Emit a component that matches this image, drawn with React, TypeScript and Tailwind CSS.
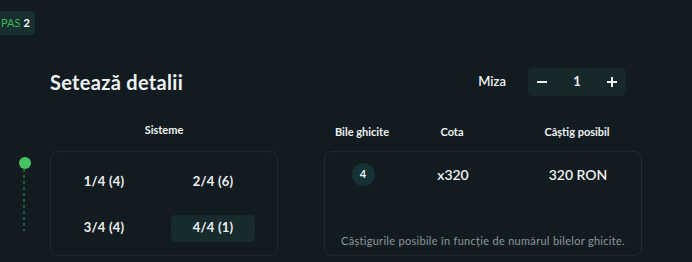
import React, { useState } from 'react';

const systems = [
    { id: '1/4', label: '1/4 (4)' },
    { id: '2/4', label: '2/4 (6)' },
    { id: '3/4', label: '3/4 (4)' },
    { id: '4/4', label: '4/4 (1)' },
];

const App: React.FC = () => {
    const [stake, setStake] = useState(1);
    const [selected, setSelected] = useState('4/4');

    return (
        <div
            className="w-[692px] h-[262px] overflow-hidden bg-[#121c20] text-[#eef1f1]"
            style={{ fontFamily: 'Lato, "Noto Sans", sans-serif' }}
        >
            <div className="pt-[9px]">
                <div className="inline-flex items-center h-[24px] pl-[1px] pr-[5px] rounded-r-[4px] bg-[#17302f] text-[11px] leading-none">
                    <span className="text-[#3fb35a]">PAS</span>
                    <span className="ml-[3px] font-bold text-white">2</span>
                </div>
            </div>

            <div className="flex">
                {/* timeline */}
                <div className="w-[50px] flex flex-col items-center pt-[122px]">
                    <div className="w-[12px] h-[12px] rounded-full bg-[#46c463] -ml-[1px]" />
                    <svg width="2" height="62" className="-ml-[2px]">
                        <line x1="1" y1="0" x2="1" y2="62" stroke="#3d9c55" strokeWidth="1" strokeDasharray="3 3" />
                    </svg>
                </div>

                <div className="w-[592px]">
                    <div className="flex items-center justify-between h-[28px] mt-[33px] pr-[16px]">
                        <h1 className="text-[20px] font-bold leading-none tracking-[0.3px]">Setează detalii</h1>
                        <div className="flex items-center gap-[22px]">
                            <span className="text-[13px] font-semibold">Miza</span>
                            <div className="flex items-center w-[98px] h-[28px] rounded-[5px] bg-[#16282b]">
                                <button
                                    className="w-[28px] h-[28px] flex items-center justify-center"
                                    onClick={() => setStake(Math.max(1, stake - 1))}
                                >
                                    <svg width="12" height="12" viewBox="0 0 12 12">
                                        <path d="M1 6h10" stroke="#eef1f1" strokeWidth="2" />
                                    </svg>
                                </button>
                                <span className="flex-1 text-center text-[13px] font-bold">{stake}</span>
                                <button
                                    className="w-[28px] h-[28px] flex items-center justify-center"
                                    onClick={() => setStake(stake + 1)}
                                >
                                    <svg width="12" height="12" viewBox="0 0 12 12">
                                        <path d="M1 6h10M6 1v10" stroke="#eef1f1" strokeWidth="2" />
                                    </svg>
                                </button>
                            </div>
                        </div>
                    </div>

                    <div className="flex gap-[46px] mt-[28px]">
                        {/* Sisteme */}
                        <div className="w-[228px]">
                            <div className="h-[14px] flex items-center justify-center text-[11px] font-bold">
                                Sisteme
                            </div>
                            <div className="mt-[13px] h-[105px] rounded-[8px] border border-[#1e2b30] pl-[11px] pt-[17px]">
                                <div className="grid grid-cols-[84px_84px] gap-x-[25px] gap-y-[19px]">
                                    {systems.map(s => (
                                        <button
                                            key={s.id}
                                            onClick={() => setSelected(s.id)}
                                            className={`h-[27px] rounded-[4px] text-[13px] font-bold tracking-[0.2px] ${selected === s.id ? 'bg-[#172a2d]' : ''}`}
                                        >
                                            {s.label}
                                        </button>
                                    ))}
                                </div>
                            </div>
                        </div>

                        {/* Castig */}
                        <div className="w-[318px]">
                            <div className="h-[14px] grid grid-cols-[76px_104px_138px] items-center text-[11px] font-bold">
                                <span className="text-center">Bile ghicite</span>
                                <span className="text-center">Cota</span>
                                <span className="text-center pl-[8px]">Câștig posibil</span>
                            </div>
                            <div className="mt-[13px] h-[105px] rounded-[8px] border border-[#1e2b30] flex flex-col">
                                <div className="grid grid-cols-[76px_104px_138px] items-center pt-[11px]">
                                    <div className="flex justify-center">
                                        <span className="w-[23px] h-[23px] rounded-full bg-[#163235] flex items-center justify-center text-[11px] font-bold">
                                            4
                                        </span>
                                    </div>
                                    <span className="text-center text-[14px] font-semibold">x320</span>
                                    <span className="text-center pl-[8px] text-[14px] font-semibold">320 RON</span>
                                </div>
                                <p className="mt-auto mb-[5px] text-center text-[11px] tracking-[0.3px] text-[#8c979b]">
                                    Câștigurile posibile în funcție de numărul bilelor ghicite.
                                </p>
                            </div>
                        </div>
                    </div>
                </div>
            </div>
        </div>
    );
};

export default App;
